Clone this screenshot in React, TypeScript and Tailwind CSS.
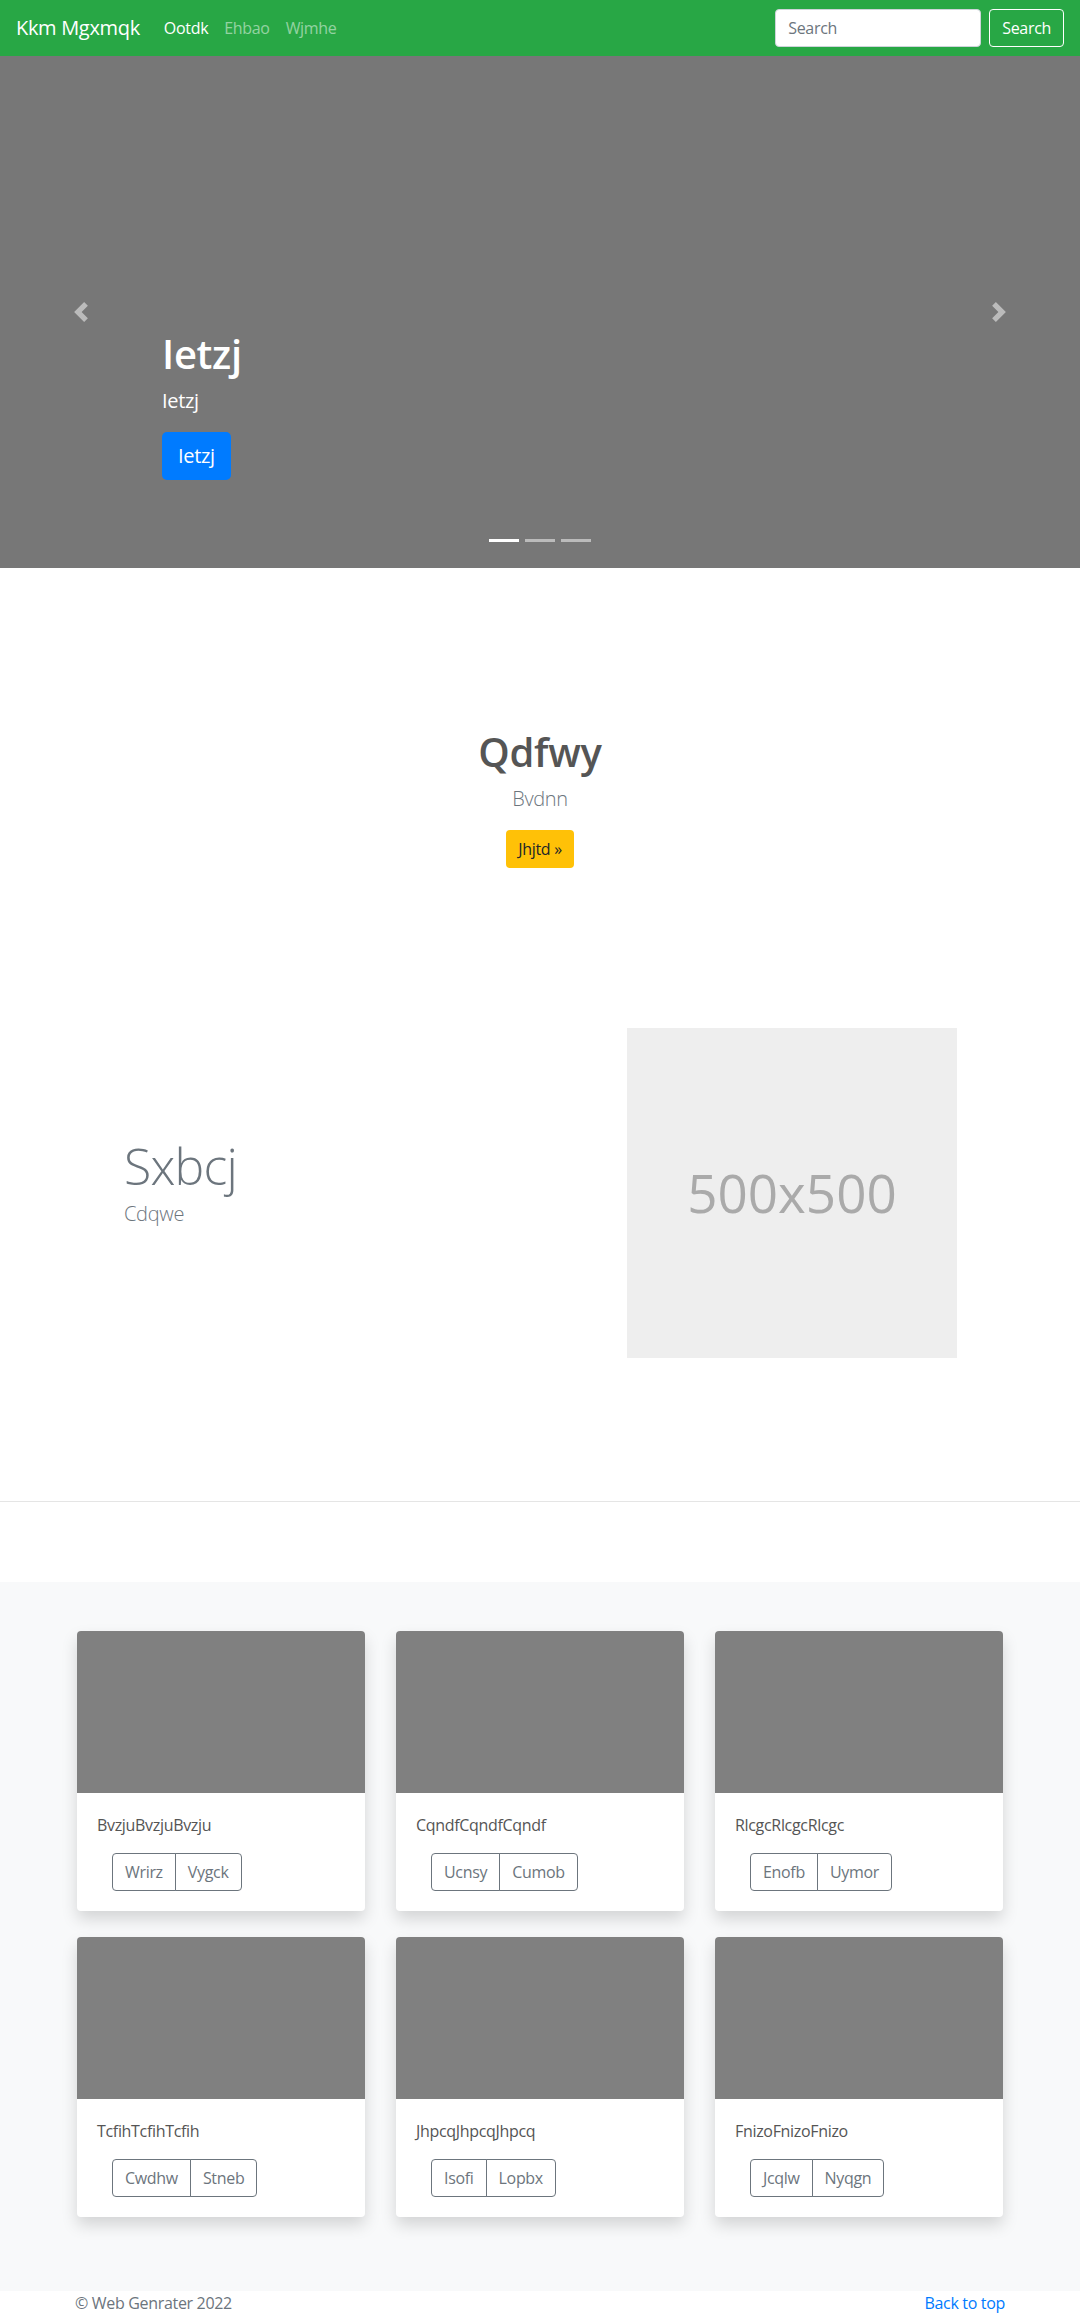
import React from "react";

const cards = [
  { title: "BvzjuBvzjuBvzju", a: "Wrirz", b: "Vygck" },
  { title: "CqndfCqndfCqndf", a: "Ucnsy", b: "Cumob" },
  { title: "RlcgcRlcgcRlcgc", a: "Enofb", b: "Uymor" },
  { title: "TcfihTcfihTcfih", a: "Cwdhw", b: "Stneb" },
  { title: "JhpcqJhpcqJhpcq", a: "Isofi", b: "Lopbx" },
  { title: "FnizoFnizoFnizo", a: "Jcqlw", b: "Nyqgn" },
];

function Navbar() {
  return (
    <nav className="flex h-[56px] items-center bg-[#28a745] px-4">
      <span className="mr-4 py-[5px] text-[20px] leading-[30px] text-white">Kkm Mgxmqk</span>
      <ul className="flex">
        <li className="px-2 py-2 text-base leading-6 text-white">Ootdk</li>
        <li className="px-2 py-2 text-base leading-6 text-white/50">Ehbao</li>
        <li className="px-2 py-2 text-base leading-6 text-white/50">Wjmhe</li>
      </ul>
      <div className="ml-auto flex items-center gap-2">
        <input
          placeholder="Search"
          className="h-[38px] w-[206px] rounded border border-[#ced4da] bg-white px-3 text-base text-[#495057] outline-none placeholder:text-[#6c757d]"
        />
        <button className="h-[38px] rounded border border-white px-3 text-base text-white">Search</button>
      </div>
    </nav>
  );
}

function Chevron({ dir }: { dir: "prev" | "next" }) {
  return (
    <svg width="20" height="20" viewBox="0 0 8 8" fill="#fff" className="opacity-50">
      {dir === "prev" ? (
        <path d="M5.25 0l-4 4 4 4 1.5-1.5L4.25 4l2.5-2.5L5.25 0z" />
      ) : (
        <path d="M2.75 0l-1.5 1.5L3.75 4l-2.5 2.5L2.75 8l4-4-4-4z" />
      )}
    </svg>
  );
}

function Carousel() {
  return (
    <div className="relative h-[512px] bg-[#777]">
      <div className="flex h-full flex-col justify-end pb-[72px] pl-[162px] text-white">
        <h1 className="mb-2 text-[40px] font-semibold leading-[48px]">Ietzj</h1>
        <p className="mb-4 text-[20px] leading-[30px]">Ietzj</p>
        <div className="mb-4">
          <button className="h-[48px] rounded-[5px] bg-[#007bff] px-4 text-[20px] leading-[30px] text-white">Ietzj</button>
        </div>
      </div>
      <div className="absolute left-0 top-0 flex h-full w-[162px] items-center justify-center">
        <Chevron dir="prev" />
      </div>
      <div className="absolute right-0 top-0 flex h-full w-[162px] items-center justify-center">
        <Chevron dir="next" />
      </div>
      <div className="absolute bottom-[26px] left-0 flex w-full justify-center gap-[6px]">
        <span className="h-[3px] w-[30px] bg-white" />
        <span className="h-[3px] w-[30px] bg-white/50" />
        <span className="h-[3px] w-[30px] bg-white/50" />
      </div>
    </div>
  );
}

function Card({ title, a, b }: { title: string; a: string; b: string }) {
  return (
    <div className="overflow-hidden rounded bg-white shadow-[0_8px_16px_rgba(0,0,0,0.15)]">
      <div className="h-[162px] bg-[#808080]" />
      <div className="p-5">
        <p className="mb-4 text-base leading-6 text-[#555]">{title}</p>
        <div className="ml-[15px] flex">
          <button className="h-[38px] rounded-l border border-[#6c757d] px-3 text-base text-[#6c757d]">{a}</button>
          <button className="-ml-px h-[38px] rounded-r border border-[#6c757d] px-3 text-base text-[#6c757d]">{b}</button>
        </div>
      </div>
    </div>
  );
}

export default function App() {
  return (
    <div className="bg-white font-['Open_Sans',sans-serif] tracking-[-0.02em]">
      <Navbar />
      <Carousel />

      <section className="pt-[160px] pb-[143px]">
        <div className="flex flex-col items-center text-center">
          <h1 className="mb-2 text-[40px] font-semibold leading-[48px] text-[#555]">Qdfwy</h1>
          <p className="mb-4 text-[20px] font-light leading-[30px] text-[#6c757d]">Bvdnn</p>
          <button className="h-[38px] rounded bg-[#ffc107] px-3 text-base leading-6 text-[#212529]">Jhjtd »</button>
        </div>

        <div className="mx-auto mt-[160px] flex w-[960px] items-center px-[15px]">
          <div className="flex-1 pl-[49px]">
            <h2 className="mb-2 text-[50px] font-light leading-none tracking-[-0.8px] text-[#6c757d]">Sxbcj</h2>
            <p className="mb-4 text-[20px] font-light leading-[30px] text-[#6c757d]">Cdqwe</p>
          </div>
          <div className="mr-[48px] flex h-[330px] w-[330px] items-center justify-center bg-[#eee]">
            <span className="text-[53px] tracking-normal text-[#aaa]">500x500</span>
          </div>
        </div>
      </section>

      <hr className="border-0 border-t border-black/10" />
      <div className="h-[80px]" />

      <section className="bg-[#f8f9fa] pt-[49px] pb-[74px]">
        <div className="mx-auto grid w-[958px] grid-cols-[288px_288px_288px] gap-x-[31px] gap-y-[26px] pl-[16px]">
          {cards.map((c) => (
            <Card key={c.title} {...c} />
          ))}
        </div>
      </section>

      <footer className="mx-auto flex w-[960px] justify-between px-[15px] text-base leading-6 text-[#6c757d]">
        <p>© Web Genrater 2022</p>
        <a href="#" className="text-[#007bff]">Back to top</a>
      </footer>
    </div>
  );
}
